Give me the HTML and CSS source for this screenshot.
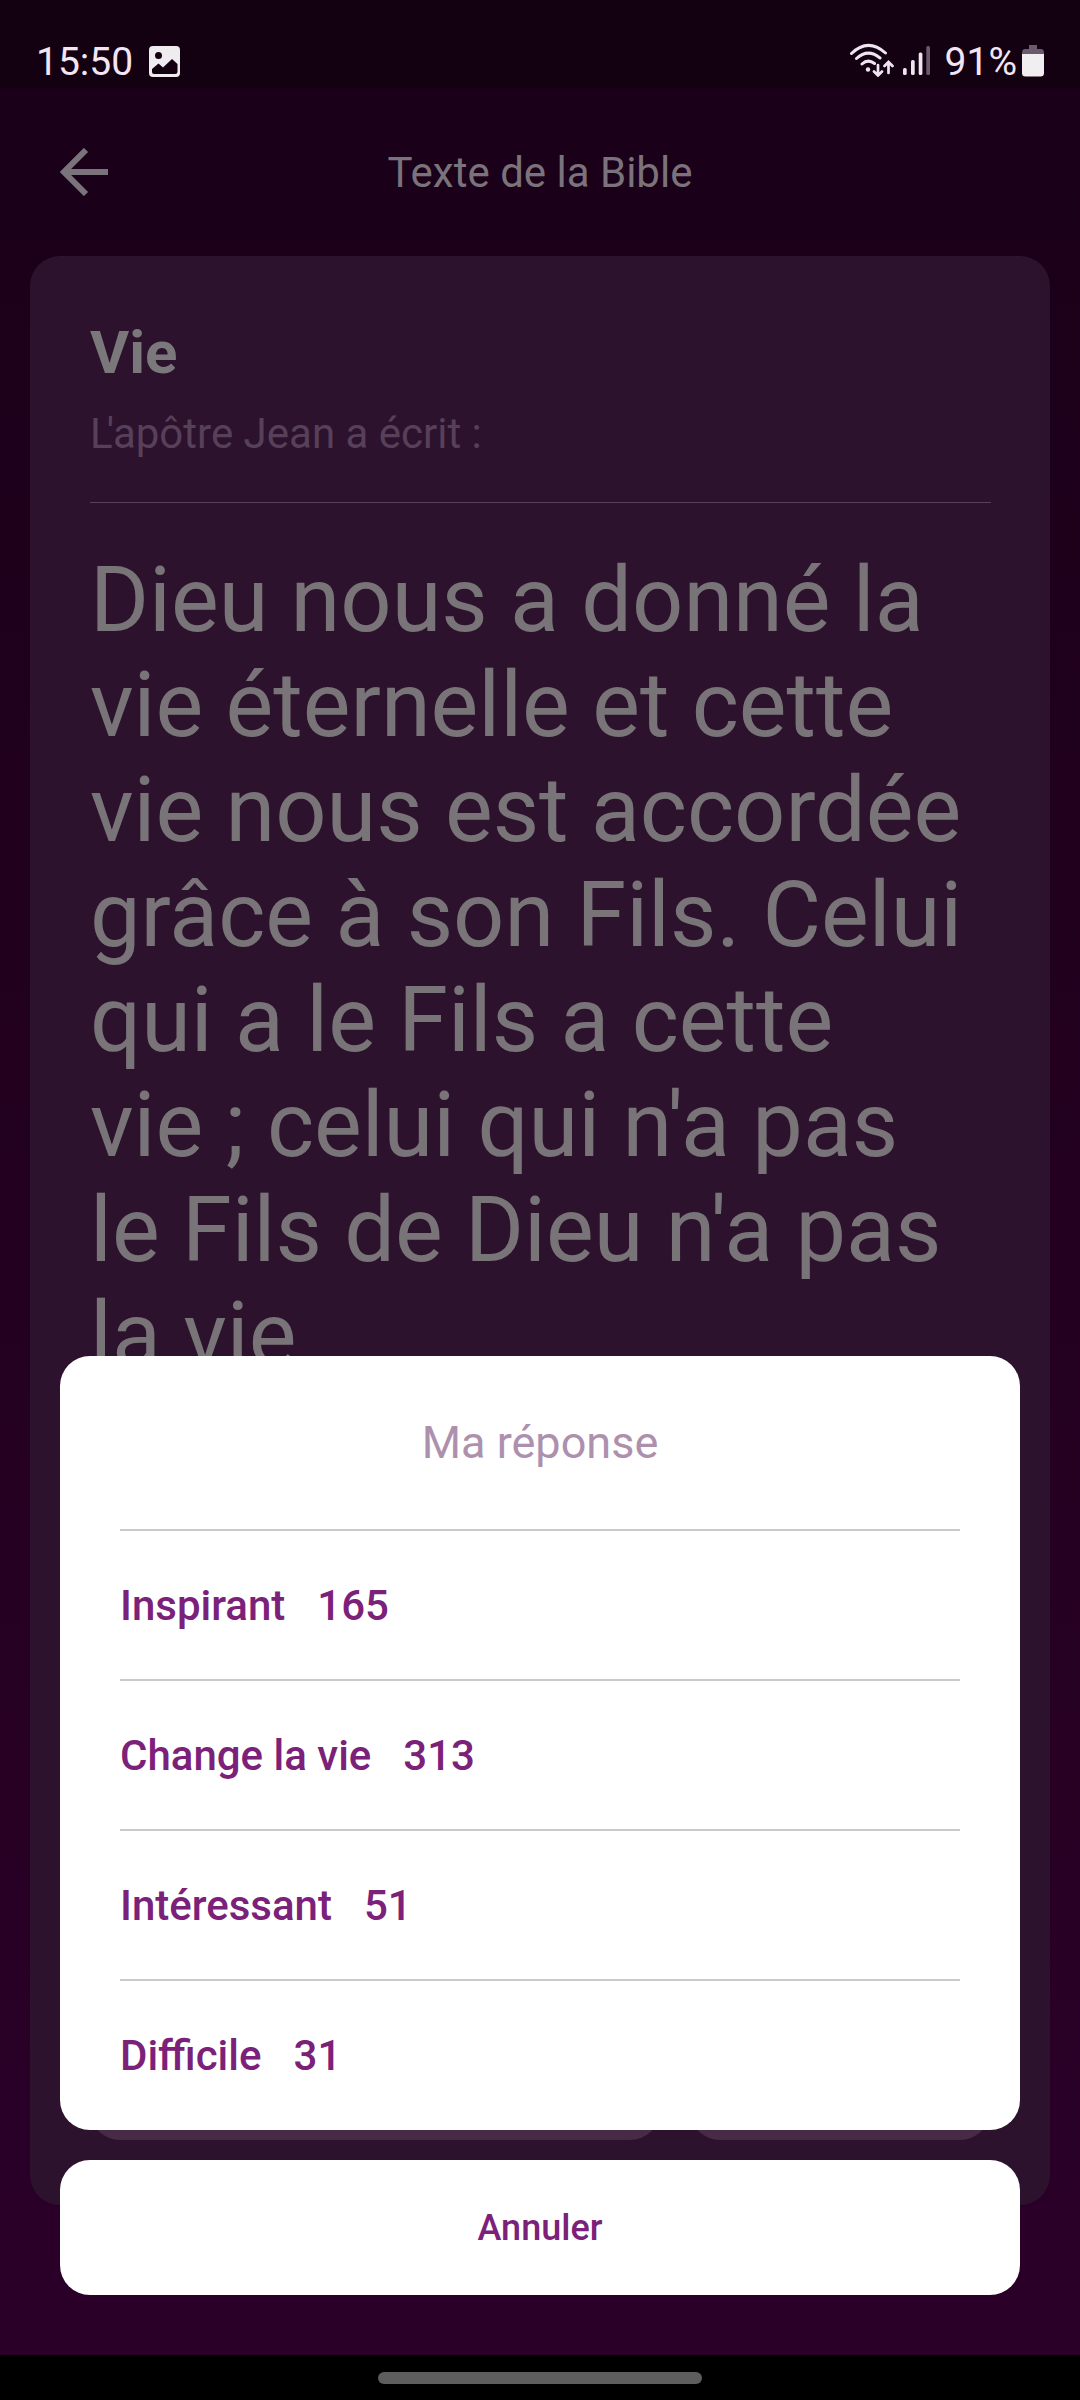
FILE: index.html
```html
<!DOCTYPE html>
<html lang="fr">
<head>
<meta charset="utf-8">
<title>Texte de la Bible</title>
<link rel="stylesheet" href="styles.css">
</head>
<body>
<div class="screen">
  <header class="status">
    <div class="status-left">
      <span class="clock">15:50</span>
      <svg class="photo" width="31" height="31" viewBox="0 0 31 31"><path fill="#efecef" fill-rule="evenodd" d="M4 0H27Q31 0 31 4V27Q31 31 27 31H4Q0 31 0 27V4Q0 0 4 0ZM3 23V26Q3 28 5 28H26Q28.500 28 28.500 26V18L23 13L14 21.500L9.500 17.500ZM9.500 6A3.500 3.500 0 1 0 9.500 13A3.500 3.500 0 1 0 9.500 6Z"/></svg>
    </div>
    <div class="status-right">
      <svg class="wifi" width="46" height="34" viewBox="0 0 46 34" fill="none" stroke="#eee5ef" stroke-width="3" stroke-linecap="round"><path d="M2.500 10.500Q19 -5.500 36.500 10M7.500 15.500Q19 5 31 15M13 21Q19 15.500 25.500 20.500"/><circle cx="19" cy="26.500" r="2.200" fill="#eee5ef" stroke="none"/><path d="M29 22V32M25 28.500L29 32.500L33 28.500M39.500 30V19.500M35.500 23L39.500 19L43.500 23" stroke-width="2.700"/></svg>
      <svg class="signal" width="28" height="30" viewBox="0 0 28 30" fill="#eee5ef"><rect x="0" y="23" width="3.700" height="7" rx="1.500"/><rect x="8" y="15" width="3.700" height="15" rx="1.500"/><rect x="15.700" y="7.500" width="3.700" height="22.500" rx="1.500"/><rect x="23.300" y="1" width="3.700" height="29" rx="1.500" fill="#6b5a6e"/></svg>
      <span class="percent">91%</span>
      <svg class="battery" width="22" height="32" viewBox="0 0 22 32"><path fill="#6b5a6e" d="M7 0H15V4H19Q22 4 22 8V10H0V8Q0 4 3 4H7Z"/><path fill="#f0eef0" d="M0 9H22V28Q22 31.500 18.500 31.500H3.500Q0 31.500 0 28Z"/></svg>
    </div>
  </header>
  <div class="appbar">
    <svg class="back" width="48" height="48" viewBox="0 0 48 48" fill="none" stroke="#7a737b" stroke-width="6"><path d="M48 24H5M26 2L4 24L26 46"/></svg>
    <h1 class="title">Texte de la Bible</h1>
  </div>
  <main class="card">
    <h2 class="heading">Vie</h2>
    <p class="intro"><span class="elision">L</span>'apôtre Jean a écrit :</p>
    <p class="verse">Dieu nous a donné la<br>vie éternelle et cette<br>vie nous est accordée<br>grâce à son Fils. Celui<br>qui a le Fils a cette<br>vie ; celui qui n'a pas<br>le Fils de Dieu n'a pas<br>la vie</p>
    <div class="actions"><span class="chip chip-wide"></span><span class="chip"></span></div>
  </main>
  <div class="sheet">
    <section class="options">
      <h3 class="options-title">Ma réponse</h3>
      <div class="option"><span>Inspirant</span><span>165</span></div>
      <div class="option"><span>Change la vie</span><span>313</span></div>
      <div class="option"><span>Intéressant</span><span>51</span></div>
      <div class="option"><span>Difficile</span><span>31</span></div>
    </section>
    <button class="cancel">Annuler</button>
  </div>
  <footer class="nav"><span class="handle"></span></footer>
</div>
</body>
</html>
```
FILE: styles.css
```css
* { box-sizing: border-box; }
body { margin: 0; font-family: Roboto, "Liberation Sans", sans-serif; background: #000; }
h1, h2, h3, p { margin: 0; font-weight: 400; }
svg { display: block; flex: none; }

.screen {
  position: relative;
  width: 1080px;
  height: 2400px;
  display: flex;
  flex-direction: column;
  overflow: hidden;
  background: linear-gradient(#1a0018 88px, #1c001a 250px, #240020 1300px, #2a0028 2200px, #2a0028 2355px);
}

.status {
  height: 88px;
  flex: none;
  display: flex;
  justify-content: space-between;
  padding: 0 36px;
  background: #130011;
  color: #f3e6f4;
}
.status-left, .status-right { display: flex; align-items: flex-start; }
.clock, .percent { font-size: 39px; line-height: 46px; padding-top: 39px; }
.photo { margin: 46px 0 0 16px; }
.wifi { margin: 43px 8px 0 0; }
.signal { margin: 45px 14px 0 0; }
.battery { margin: 45px 0 0 5px; }

.appbar {
  height: 168px;
  flex: none;
  display: grid;
  grid-template-columns: 60px 1fr 60px;
  align-items: center;
  padding: 0 60px;
}
.title { padding-top: 2px; font-size: 42px; line-height: 50px; text-align: center; color: #7a737b; }

.card {
  height: 1949px;
  flex: none;
  margin: 0 30px;
  padding: 61px 59px 60px 60px;
  border-radius: 30px;
  background: #2d122d;
  display: flex;
  flex-direction: column;
}
.heading { font-size: 60px; line-height: 72px; font-weight: 700; color: #7b787b; }
.intro {
  font-size: 42px;
  line-height: 50px;
  padding: 20px 0 43px;
  color: #57405a;
  border-bottom: 1px solid #57405a;
}
.elision { letter-spacing: -6px; }
.verse { padding-top: 45px; font-size: 90px; line-height: 105px; color: #787478; white-space: nowrap; }
.actions { margin-top: auto; margin-bottom: 5px; display: flex; gap: 30px; }
.chip { width: 300px; height: 90px; border-radius: 30px; background: #462a46; }
.chip-wide { width: 570px; }

.sheet {
  position: absolute;
  left: 60px;
  top: 1356px;
  width: 960px;
  display: flex;
  flex-direction: column;
  gap: 30px;
}
.options { height: 774px; padding: 0 60px; border-radius: 30px; background: #fff; }
.options-title { height: 173px; font-size: 45px; line-height: 174px; text-align: center; color: #ad90ad; }
.option {
  height: 150px;
  border-top: 2px solid #cacaca;
  display: flex;
  align-items: center;
  gap: 32px;
  font-size: 42px;
  font-weight: 500;
  color: #7b2179;
}
.cancel {
  height: 135px;
  border: 0;
  border-radius: 30px;
  background: #fff;
  font: 500 36px Roboto, "Liberation Sans", sans-serif;
  color: #7b2179;
}

.nav {
  height: 45px;
  flex: none;
  margin-top: auto;
  display: flex;
  justify-content: center;
  padding-top: 17px;
  background: #000;
}
.handle { width: 324px; height: 12px; border-radius: 6px; background: #5e5e5e; }
```
